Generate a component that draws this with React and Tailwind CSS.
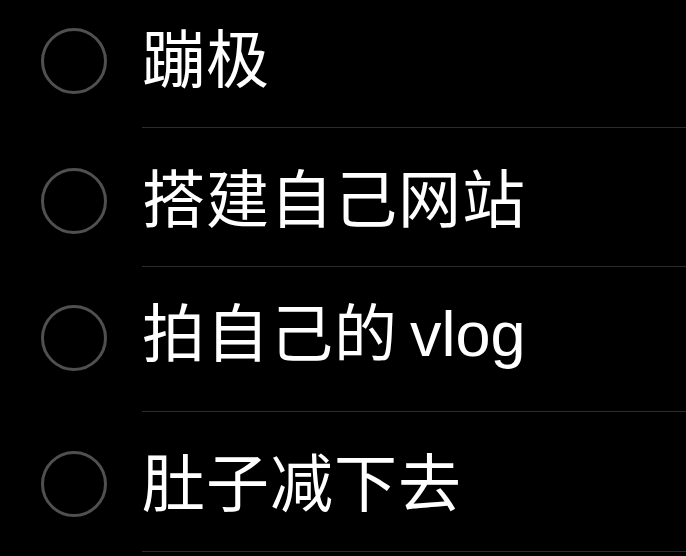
import React from 'react';

const todos = [
    { text: '蹦极', row: 'h-[128px] pb-[7px]' },
    { text: '搭建自己网站', row: 'h-[139px] pt-[6px]' },
    { text: '拍自己的', latin: 'vlog', row: 'h-[145px] pb-[4px]' },
    { text: '肚子减下去', row: 'h-[140px] pt-[4px]' },
];

const App = () => {
    return (
        <div className="w-[686px] h-[556px] bg-black overflow-hidden" style={{ fontFamily: '"Noto Sans CJK SC", "Noto Sans", sans-serif' }}>
            {todos.map((todo) => (
                <div key={todo.text} className="flex">
                    <div className="w-[142px] shrink-0 flex items-center">
                        <div className={`w-full flex items-center ${todo.row}`}>
                            <div className="ml-[41px] w-[66px] h-[66px] rounded-full border-[3px] border-[#505050]"></div>
                        </div>
                    </div>
                    <div className={`flex-1 flex items-center border-b border-[#2c2c2c] ${todo.row}`}>
                        <span className="text-white text-[63px] leading-none font-normal tracking-[1px] -mt-[11px] flex items-baseline">
                            {todo.text}
                            {todo.latin && (
                                <span className="ml-[12px] tracking-normal font-['Liberation_Sans',sans-serif] font-normal">{todo.latin}</span>
                            )}
                        </span>
                    </div>
                </div>
            ))}
        </div>
    );
};

export default App;
